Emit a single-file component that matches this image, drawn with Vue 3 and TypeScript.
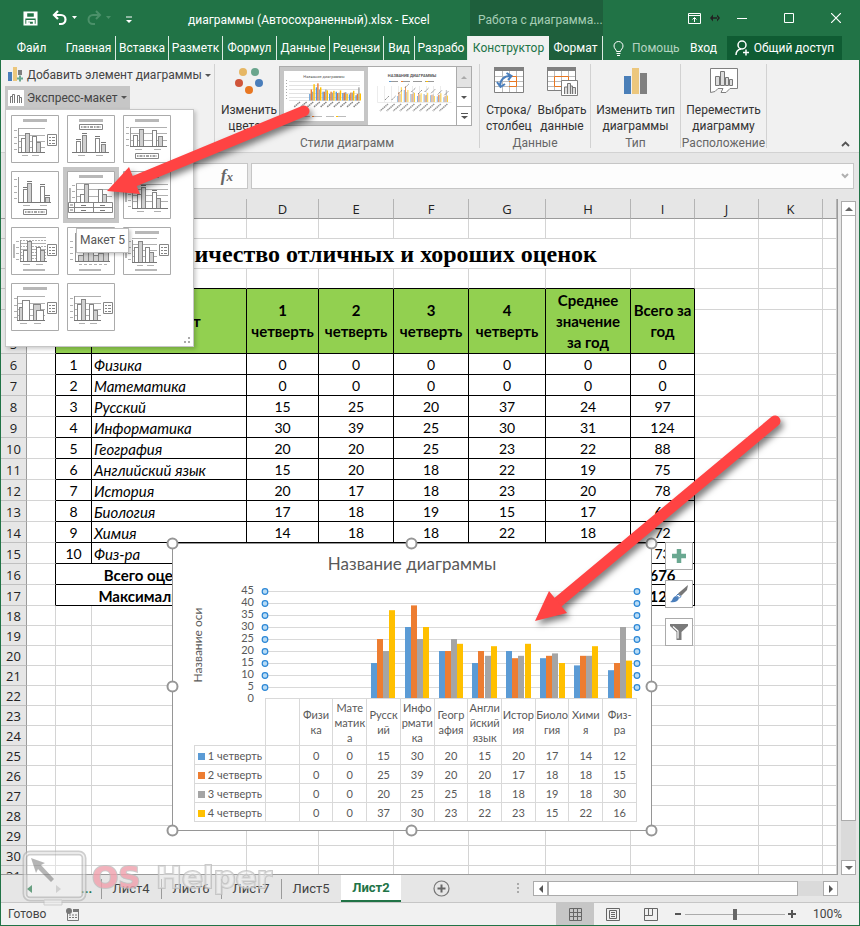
<script setup lang="ts">
import { ref } from 'vue'

interface Bar { x: number; y: number; w?: number; fill?: boolean; cap?: boolean }
interface Layout {
  title?: boolean
  legend?: 'right' | 'rightLow' | 'top' | 'bottom'
  grid?: number[]
  gridX?: [number, number]
  dashed?: boolean
  axisY?: boolean
  yTitle?: boolean
  xTitle?: boolean
  ticks?: number[]
  table?: boolean
  base: number
  baseX: [number, number]
  bars: Bar[]
  labels?: [number, number][]
}

const layouts: Layout[] = [
  { title: true, legend: 'right', grid: [13, 20, 26, 32], gridX: [7, 34], ticks: [15, 22, 28, 34], base: 37, baseX: [7, 34],
    bars: [{ x: 10, y: 23 }, { x: 14, y: 18, fill: true }, { x: 21, y: 21 }, { x: 25, y: 27, fill: true }], labels: [[11, 17], [21, 28]] },
  { title: true, legend: 'top', base: 37, baseX: [5, 42],
    bars: [{ x: 9, y: 26, cap: true }, { x: 15, y: 20, fill: true, cap: true }, { x: 28, y: 23, cap: true }, { x: 34, y: 29, fill: true, cap: true }], labels: [[11, 18], [29, 36]] },
  { title: true, legend: 'bottom', grid: [12, 18, 25], gridX: [7, 44], ticks: [12, 18, 24, 30], base: 31, baseX: [7, 44],
    bars: [{ x: 10, y: 20 }, { x: 16, y: 14, fill: true }, { x: 29, y: 15 }, { x: 35, y: 21, fill: true }], labels: [[12, 19], [31, 38]] },
  { legend: 'bottom', axisY: true, ticks: [8, 15, 21, 27], base: 31, baseX: [7, 40],
    bars: [{ x: 12, y: 18, cap: true }, { x: 16, y: 12, fill: true, cap: true }, { x: 29, y: 15, cap: true }, { x: 34, y: 26, fill: true, cap: true }], labels: [[12, 19], [29, 36]] },
  { title: true, yTitle: true, table: true, grid: [12, 18, 25], gridX: [9, 45], ticks: [14, 20, 26], base: 31, baseX: [9, 45],
    bars: [{ x: 13, y: 23 }, { x: 17, y: 13, fill: true }, { x: 31, y: 18 }, { x: 35, y: 23, fill: true }] },
  { title: true, yTitle: true, grid: [13, 18, 24, 30], gridX: [9, 45], ticks: [17, 23, 29, 35], base: 37, baseX: [9, 45],
    bars: [{ x: 14, y: 23 }, { x: 18, y: 16, fill: true, cap: true }, { x: 29, y: 21, cap: true }, { x: 33, y: 27, fill: true }], labels: [[14, 21], [31, 38]] },
  { yTitle: true, xTitle: true, legend: 'rightLow', dashed: true, grid: [10, 13, 16, 19, 22, 25, 28, 31], gridX: [9, 35], ticks: [14, 20, 26, 32], base: 34, baseX: [9, 36],
    bars: [{ x: 12, y: 23 }, { x: 16, y: 14, fill: true }, { x: 25, y: 20 }, { x: 29, y: 23, fill: true }], labels: [[12, 19], [25, 32]] },
  { title: true, xTitle: true, base: 34, baseX: [8, 43], ticks: [14, 20, 26, 32], axisY: true,
    bars: [{ x: 11, y: 28, w: 5, fill: true }, { x: 16, y: 25, w: 5, fill: true }, { x: 21, y: 18, w: 5, fill: true }, { x: 26, y: 28, w: 5, fill: true }, { x: 31, y: 26, w: 5, fill: true }, { x: 36, y: 22, w: 5, fill: true }],
    labels: [[12, 15], [17, 20], [22, 25], [27, 30], [32, 35], [37, 40]] },
  { title: true, yTitle: true, xTitle: true, legend: 'rightLow', grid: [11, 17, 23, 29], gridX: [9, 34], ticks: [14, 20, 26, 32], base: 35, baseX: [9, 34],
    bars: [{ x: 11, y: 20 }, { x: 15, y: 14, fill: true }, { x: 22, y: 20 }, { x: 26, y: 25, fill: true }], labels: [[14, 20], [24, 31]] },
  { title: true, legend: 'right', grid: [13, 20, 26, 32], gridX: [7, 34], ticks: [15, 22, 28, 34], base: 37, baseX: [6, 34],
    bars: [{ x: 8, y: 24, w: 4, fill: true }, { x: 11, y: 17, w: 7 }, { x: 22, y: 21, w: 7, fill: true }, { x: 25, y: 27, w: 7 }], labels: [[9, 16], [23, 30]] },
  { legend: 'right', grid: [13, 20, 26, 32], gridX: [7, 34], ticks: [15, 22, 28, 34], base: 37, baseX: [7, 34],
    bars: [{ x: 10, y: 21 }, { x: 14, y: 16, fill: true }, { x: 22, y: 21 }, { x: 26, y: 27, fill: true }], labels: [[12, 18], [23, 30]] }
]
const selectedLayout = ref(4)

const tabText = ['Главная', 'Вставка', 'Разметк', 'Формул', 'Данные', 'Рецензи', 'Вид', 'Разрабо']

const columns = ['A', 'B', 'C', 'D', 'E', 'F', 'G', 'H', 'I', 'J', 'K', '']

interface Subject { name: string; wrap: string[]; q: number[]; avg: number; sum: number }
const subjects: Subject[] = [
  { name: 'Физика', wrap: ['Физи', 'ка'], q: [0, 0, 0, 0], avg: 0, sum: 0 },
  { name: 'Математика', wrap: ['Мате', 'матик', 'а'], q: [0, 0, 0, 0], avg: 0, sum: 0 },
  { name: 'Русский', wrap: ['Русск', 'ий'], q: [15, 25, 20, 37], avg: 24, sum: 97 },
  { name: 'Информатика', wrap: ['Инфо', 'рмати', 'ка'], q: [30, 39, 25, 30], avg: 31, sum: 124 },
  { name: 'География', wrap: ['Геогр', 'афия'], q: [20, 20, 25, 23], avg: 22, sum: 88 },
  { name: 'Английский язык', wrap: ['Англи', 'йский', 'язык'], q: [15, 20, 18, 22], avg: 19, sum: 75 },
  { name: 'История', wrap: ['Истор', 'ия'], q: [20, 17, 18, 23], avg: 20, sum: 78 },
  { name: 'Биология', wrap: ['Биоло', 'гия'], q: [17, 18, 19, 15], avg: 17, sum: 69 },
  { name: 'Химия', wrap: ['Хими', 'я'], q: [14, 18, 18, 22], avg: 18, sum: 72 },
  { name: 'Физ-ра', wrap: ['Физ-', 'ра'], q: [12, 15, 30, 16], avg: 18, sum: 73 }
]
const series = [
  { name: '1 четверть', color: '#5b9bd5' },
  { name: '2 четверть', color: '#ed7d31' },
  { name: '3 четверть', color: '#a5a5a5' },
  { name: '4 четверть', color: '#ffc000' }
]
const blankRows = Array.from({ length: 14 }, (_, i) => 18 + i)
const axisValues = [0, 5, 10, 15, 20, 25, 30, 35, 40, 45]
const levelY = (v: number) => 122 - v * 2.4
const catX = (i: number) => 92 + (i + 1) * 33.8
const thumbX = (i: number) => 12 + i * 6.6
const handles = [[0, 0], [239, 0], [479, 0], [0, 143], [479, 143], [0, 287], [239, 287], [479, 287]]
const sheets = ['Лист4', 'Лист6', 'Лист7', 'Лист5']
const zoom = ref(100)
const formula = ref('')
</script>

<template>
  <div class="window">
    <header class="titlebar">
      <div class="quick">
        <button type="button" aria-label="Сохранить">
          <svg width="15" height="15" viewBox="0 0 16 16"><path d="M1.500 1.500h13v13h-13zM3.500 1.500v5.500h9v-5.500M4.500 14.500v-4h7v4M6.500 14v-2" fill="none" stroke="#fff" stroke-width="2" /></svg>
        </button>
        <button type="button" aria-label="Отменить" class="undo">
          <svg width="26" height="16" viewBox="0 0 26 16"><path d="M6 1L2 5l4 4M2 5h7a4.500 4.500 0 0 1 0 9h-2" fill="none" stroke="#fff" stroke-width="2.200" /><path d="M20 6h5l-2.500 3z" fill="#fff" /></svg>
        </button>
        <button type="button" aria-label="Повторить" class="redo">
          <svg width="26" height="16" viewBox="0 0 26 16"><path d="M10 1l4 4-4 4M14 5h-7a4.500 4.500 0 0 0 0 9h2" fill="none" stroke="#4b9069" stroke-width="2" /><path d="M20 6h5l-2.500 3z" fill="#4b9069" /></svg>
        </button>
        <button type="button" aria-label="Настройка панели" class="custom">
          <svg width="6" height="8" viewBox="0 0 6 8"><path d="M0 1h6" stroke="#fff" /><path d="M0 4h6l-3 3z" fill="#fff" /></svg>
        </button>
      </div>
      <h1>диаграммы (Автосохраненный).xlsx - Excel</h1>
      <div class="context">Работа с диаграмма...</div>
      <div class="win-buttons">
        <button type="button" aria-label="Параметры ленты">
          <svg width="13" height="11" viewBox="0 0 13 11"><path d="M.5.5h12v10H.5zM.5 2.500h12M6.500 9V4.500M4.500 6.500l2-2 2 2" fill="none" stroke="#fff" /></svg>
        </button>
        <svg class="resize" width="10" height="8" viewBox="0 0 10 8"><path d="M0 4l3-3.500v7zM10 4L7 .5v7zM2 3.200h6v1.600H2z" fill="#222" /></svg>
        <button type="button" aria-label="Свернуть"><svg width="10" height="10" viewBox="0 0 10 10"><path d="M0 5.500h10" stroke="#fff" /></svg></button>
        <button type="button" aria-label="Развернуть"><svg width="10" height="10" viewBox="0 0 10 10"><path d="M.5.5h9v9h-9z" fill="none" stroke="#fff" /></svg></button>
        <button type="button" aria-label="Закрыть"><svg width="10" height="10" viewBox="0 0 10 10"><path d="M0 0l10 10M10 0L0 10" stroke="#fff" stroke-width="1.200" /></svg></button>
      </div>
    </header>

    <nav class="tabs">
      <button type="button" class="file">Файл</button>
      <button v-for="t in tabText" :key="t" type="button" class="tab" :class="{ short: t === 'Вид' }">{{ t }}</button>
      <button type="button" class="tab active">Конструктор</button>
      <button type="button" class="tab dark">Формат</button>
      <button type="button" class="help">
        <svg width="11" height="15" viewBox="0 0 11 15"><path d="M3.500 10.500C3.500 8.500 1 7.800 1 5a4.500 4.500 0 0 1 9 0c0 2.800-2.500 3.500-2.500 5.500zM3.500 12.500h4M4 14.500h3" fill="none" stroke="#fff" /></svg>
        Помощь
      </button>
      <button type="button" class="login">Вход</button>
      <button type="button" class="share">
        <svg width="15" height="16" viewBox="0 0 15 16"><circle cx="7" cy="5" r="4" fill="none" stroke="#fff" stroke-width="1.500" /><path d="M1 15c0-3.500 2-5.500 5-6M11 9.500v6M8 12.500h6" fill="none" stroke="#fff" stroke-width="1.500" /></svg>
        Общий доступ
      </button>
    </nav>

    <section class="ribbon">
      <div class="group layouts">
        <button type="button" class="line">
          <svg width="16" height="16" viewBox="0 0 16 16"><path d="M0 5h4v9H0z" fill="#4a7ebb" /><path d="M5 0h4v14H5z" fill="#ecc77d" /><path d="M10 3h4v5h-4z" fill="#7f7f7f" /><path d="M9 11.500h6M12 8.500v6" stroke="#6aa891" stroke-width="2" /></svg>
          Добавить элемент диаграммы <i class="caret"></i>
        </button>
        <button type="button" class="line express">
          <svg width="16" height="16" viewBox="0 0 16 16"><path d="M0 0h16v16H0z" fill="#fff" /><path d="M2.500 13V6.500h2V13M4.500 13V4.500h2V13M9.500 13V5.500h2V13M11.500 13V7.500h2V13" fill="none" stroke="#777" /></svg>
          Экспресс-макет <i class="caret"></i>
        </button>
      </div>

      <div class="group styles">
        <div class="group-body">
          <button type="button" class="big colors">
            <svg width="30" height="28" viewBox="0 0 30 28"><circle cx="9" cy="5" r="4" fill="#e6b765" /><circle cx="21" cy="5" r="4" fill="#6aa58d" /><circle cx="5" cy="16" r="4" fill="#d0553a" /><circle cx="25" cy="16" r="4" fill="#4a7ebb" /><circle cx="15" cy="23" r="4" fill="#e87722" /></svg>
            <span>Изменить<br>цвета <i class="caret"></i></span>
          </button>
          <div class="gallery">
            <button type="button" class="thumb on" aria-label="Стиль 1">
              <svg width="80" height="48" viewBox="0 0 80 48">
                <path d="M0 0h80v48H0z" fill="#fff" />
                <text x="40" y="6" class="tiny">Название диаграммы</text>
                <path d="M5 9.500h71M5 13.500h71M5 17.500h71M5 21.500h71M5 25.500h71M5 28.500h71" stroke="#e2e2e2" />
                <path d="M2.500 8v21" stroke="#aaa" stroke-dasharray="1 2" />
                <template v-for="(s, i) in subjects" :key="i">
                  <rect v-for="(v, k) in s.q" :key="k" :x="thumbX(i) + k * 1.4" :y="28.500 - v * .44" width="1.400" :height="v * .44" :fill="series[k].color" />
                  <path :d="`M${thumbX(i) + 4} 30l-6 5`" stroke="#888" stroke-width="1.500" stroke-dasharray="1.500 .5" />
                </template>
                <path d="M18 44.500h8M30 44.500h8M42 44.500h8M54 44.500h8" stroke="#bbb" /><path d="M28 44.500h2" stroke="#ed7d31" /><path d="M52 44.500h2" stroke="#ffc000" />
              </svg>
            </button>
            <button type="button" class="thumb" aria-label="Стиль 2">
              <svg width="80" height="48" viewBox="0 0 80 48">
                <text x="40" y="5" class="tiny strong">НАЗВАНИЕ ДИАГРАММЫ</text>
                <path d="M17 9.500h46" stroke="#999" stroke-dasharray="9 3" /><path d="M17 9.500h2" stroke="#5b9bd5" /><path d="M29 9.500h2" stroke="#ed7d31" /><path d="M54 9.500h2" stroke="#ffc000" />
                <path d="M5.500 14v16.500h74M12.500 14v16M19.500 14v16M26.500 14v16M33.500 14v16M40.500 14v16M47.500 14v16M54.500 14v16M61.500 14v16M68.500 14v16" fill="none" stroke="#ececec" />
                <template v-for="(s, i) in subjects" :key="i">
                  <rect v-for="(v, k) in s.q" :key="k" :x="thumbX(i) + k * 1.2" :y="30 - v * .4" width="1" :height="v * .4" :fill="series[k].color" opacity=".75" />
                  <path :d="`M${thumbX(i) + 1} ${28 - s.q[0] * .4}l4 -4`" stroke="#888" stroke-dasharray="1.500 .5" />
                  <path :d="`M${thumbX(i) + 4} 32l-8 7`" stroke="#999" stroke-width="1.500" stroke-dasharray="1.500 .5" />
                </template>
              </svg>
            </button>
            <div class="spin">
              <button type="button" aria-label="Вверх" class="off"><svg width="6" height="3" viewBox="0 0 6 3"><path d="M0 3l3-3 3 3z" fill="#aaa" /></svg></button>
              <button type="button" aria-label="Вниз"><svg width="6" height="3" viewBox="0 0 6 3"><path d="M0 0h6L3 3z" fill="#555" /></svg></button>
              <button type="button" aria-label="Ещё"><svg width="7" height="6" viewBox="0 0 7 6"><path d="M0 .5h7" stroke="#555" /><path d="M0 3h7L3.500 6z" fill="#555" /></svg></button>
            </div>
          </div>
        </div>
        <div class="caption">Стили диаграмм</div>
      </div>

      <div class="group data">
        <div class="group-body">
          <button type="button" class="big">
            <svg width="30" height="30" viewBox="0 0 30 30"><path d="M.5 1.500h29v25H.5z" fill="#fff" stroke="#808080" /><path d="M0 1h30v4H0z" fill="#808080" /><path d="M1 10.500h28M1 15.500h28M1 20.500h28M8.500 5v21M15.500 5v21M22.500 5v21" stroke="#bbb" /><path d="M15 10.500h7.500v10H15M15 15.500h7" fill="none" stroke="#e87722" /><path d="M6 20c0-6 4-10 10-10M3 16l3.500 5 4.500-3M12.500 7l5 3-3.500 4" fill="none" stroke="#4a7ebb" stroke-width="2" /></svg>
            <span>Строка/<br>столбец</span>
          </button>
          <button type="button" class="big">
            <svg width="31" height="30" viewBox="0 0 31 30"><path d="M.5 1.500h28v23H.5z" fill="#fff" stroke="#808080" /><path d="M0 1h29v4H0z" fill="#808080" /><path d="M1 10.500h27M1 15.500h27M1 20.500h27M7.500 5v19M14.500 5v19M21.500 5v19" stroke="#bbb" /><path d="M7.500 20.500v-10h14v5M7.500 20.500h7" fill="none" stroke="#e87722" /><path d="M14.500 14.500h16v15h-16z" fill="#fff" stroke="#808080" /><path d="M17.500 28v-7h3v7M20.500 28V17.500h3V28M25.500 28v-6.500h3V28M23.500 28v-8h2v8" fill="#ddd" stroke="#777" /></svg>
            <span>Выбрать<br>данные</span>
          </button>
        </div>
        <div class="caption">Данные</div>
      </div>

      <div class="group type">
        <div class="group-body">
          <button type="button" class="big">
            <svg width="24" height="28" viewBox="0 0 24 28"><path d="M0 9h7v18H0z" fill="#4a7fb8" /><path d="M8 1h7v26H8z" fill="#ecc77d" /><path d="M16 6h7v21h-7z" fill="#808080" /></svg>
            <span>Изменить тип<br>диаграммы</span>
          </button>
        </div>
        <div class="caption">Тип</div>
      </div>

      <div class="group place">
        <div class="group-body">
          <button type="button" class="big">
            <svg width="28" height="28" viewBox="0 0 28 28"><path d="M.5 25.500V1.500h27v20H20l-4 4h-5l2-4H8l-3 3z" fill="#fff" stroke="#808080" /><path d="M5.500 18.500v-9h4v9zM10.500 18.500v-14h4v14zM15.500 18.500v-8h3v8zM19.500 18.500v-6h3v6z" fill="#ddd" stroke="#777" /></svg>
            <span>Переместить<br>диаграмму</span>
          </button>
        </div>
        <div class="caption">Расположение</div>
      </div>

      <button type="button" class="collapse" aria-label="Свернуть ленту"><svg width="9" height="6" viewBox="0 0 9 6"><path d="M1 5l3.500-3.500L8 5" fill="none" stroke="#555" stroke-width="1.800" /></svg></button>
    </section>

    <div class="formula">
      <div class="fx-box">
        <button type="button" aria-label="Ввод"><svg width="9" height="9" viewBox="0 0 9 9"><path d="M1 5l2.500 3L8 1" fill="none" stroke="#b0b0b0" stroke-width="1.800" /></svg></button>
        <button type="button" aria-label="Вставить функцию" class="fx">f<small>x</small></button>
      </div>
      <div class="input-box">
        <input v-model="formula" type="text" aria-label="Строка формул">
        <svg width="8" height="6" viewBox="0 0 8 6"><path d="M1 1l3 3 3-3" fill="none" stroke="#b0b0b0" stroke-width="2" /></svg>
      </div>
    </div>

    <main class="workspace">
      <div class="sheet">
        <table class="cells">
          <colgroup><col class="w-h"><col class="w-a"><col class="w-b"><col class="w-c"><col class="w-d"><col class="w-e"><col class="w-e"><col class="w-g"><col class="w-hh"><col class="w-i"><col class="w-i"><col class="w-i"><col></colgroup>
          <thead>
            <tr><th class="corner"></th><th v-for="(c, i) in columns" :key="i" scope="col" class="col-h">{{ c }}</th></tr>
          </thead>
          <tbody>
            <tr class="r20"><th scope="row">1</th><td v-for="n in 12" :key="n"></td></tr>
            <tr class="r30"><th scope="row">2</th><td></td><td colspan="8" class="title">Количество отличных и хороших оценок</td><td></td><td></td><td></td></tr>
            <tr class="r20"><th scope="row">3</th><td></td><td v-for="n in 8" :key="n" class="over"></td><td></td><td></td><td></td></tr>
            <tr class="r21">
              <th scope="row">4</th><td class="edge"></td>
              <td class="g" rowspan="2">№</td><td class="g" rowspan="2">Предмет</td>
              <td v-for="n in 4" :key="n" class="g" rowspan="2">{{ n }}<br>четверть</td>
              <td class="g" rowspan="2">Среднее<br>значение<br>за год</td><td class="g" rowspan="2">Всего за<br>год</td>
              <td></td><td></td><td></td>
            </tr>
            <tr class="r44"><th scope="row">5</th><td class="edge"></td><td></td><td></td><td></td></tr>
            <tr v-for="(s, i) in subjects" :key="s.name" class="r21">
              <th scope="row">{{ i + 6 }}</th><td class="edge"></td>
              <td class="k">{{ i + 1 }}</td><td class="k name">{{ s.name }}</td>
              <td v-for="(v, k) in s.q" :key="k" class="k">{{ v }}</td>
              <td class="k">{{ s.avg }}</td><td class="k">{{ s.sum }}</td>
              <td></td><td></td><td></td>
            </tr>
            <tr class="r21"><th scope="row">16</th><td class="edge"></td><td colspan="2" class="k b">Всего оценок</td><td v-for="n in 5" :key="n" class="k"></td><td class="k b">676</td><td></td><td></td><td></td></tr>
            <tr class="r21"><th scope="row">17</th><td class="edge"></td><td colspan="2" class="k b">Максимальное</td><td v-for="n in 5" :key="n" class="k"></td><td class="k b">124</td><td></td><td></td><td></td></tr>
            <tr v-for="r in blankRows" :key="r" class="r20"><th scope="row">{{ r }}</th><td v-for="n in 12" :key="n"></td></tr>
          </tbody>
        </table>

        <figure class="chart">
          <figcaption>Название диаграммы</figcaption>
          <svg class="plot" width="478" height="121" viewBox="0 0 478 121">
            <text class="ax ax-title" text-anchor="middle" transform="translate(29 68) rotate(-90)">Название оси</text>
            <g v-for="v in axisValues" :key="v">
              <text class="ax" x="81" :y="levelY(v) + 3" text-anchor="end">{{ v }}</text>
              <path v-if="v" :d="`M92 ${Math.round(levelY(v)) + .5}h371`" stroke="#d9d9d9" />
            </g>
            <template v-for="(s, i) in subjects" :key="i">
              <template v-for="(v, k) in s.q" :key="k">
                <rect v-if="v" :x="Math.round(catX(i) + 4.500 + k * 6.200)" :y="levelY(v)" width="6" :height="121 - levelY(v)" :fill="series[k].color" />
              </template>
            </template>
            <template v-for="v in axisValues" :key="v">
              <template v-if="v">
                <circle cx="92" :cy="levelY(v) + .5" r="2.800" fill="#b9dcf5" stroke="#2a86d6" stroke-width="1.200" />
                <circle cx="464" :cy="levelY(v) + .5" r="2.800" fill="#b9dcf5" stroke="#2a86d6" stroke-width="1.200" />
              </template>
            </template>
          </svg>
          <table class="legend">
            <colgroup><col class="lg"><col v-for="n in 11" :key="n"></colgroup>
            <thead>
              <tr><td class="none"></td><td></td><th v-for="s in subjects" :key="s.name" scope="col"><template v-for="(w, i) in s.wrap" :key="i"><br v-if="i">{{ w }}</template></th></tr>
            </thead>
            <tbody>
              <tr v-for="(q, k) in series" :key="k"><th scope="row"><i class="key" :style="{ background: q.color }"></i>{{ q.name }}</th><td></td><td v-for="s in subjects" :key="s.name">{{ s.q[k] }}</td></tr>
            </tbody>
          </table>
          <svg class="handles" width="480" height="288" viewBox="0 0 480 288"><circle v-for="(h, i) in handles" :key="i" :cx="h[0] + .5" :cy="h[1] + .5" r="5" fill="#fff" stroke="#969696" stroke-width="2" /></svg>
        </figure>

        <div class="chart-tools">
          <button type="button" aria-label="Элементы диаграммы"><svg width="16" height="16" viewBox="0 0 16 16"><path d="M8 1v14M1 8h14" stroke="#6aa891" stroke-width="4.500" /></svg></button>
          <button type="button" aria-label="Стили диаграммы"><svg width="20" height="20" viewBox="0 0 20 20"><path d="M19 1l-1 5-6 6-3-2.500z" fill="#777" /><path d="M9 10l3 2.500-1.500 1.500-3-2.500z" fill="#fff" stroke="#4a7ebb" /><path d="M1 18c3-1 2-5 6-6l3 2c-1 4-5 5-9 4z" fill="#4a7ebb" /></svg></button>
          <button type="button" aria-label="Фильтры диаграммы"><svg width="18" height="18" viewBox="0 0 18 18"><path d="M0 1h18v2l-6.500 6v8h-5V9L0 3z" fill="#7a7a7a" /><path d="M3 3.500l5 4.500v7.500" fill="none" stroke="#fff" stroke-width="1.200" /></svg></button>
        </div>
      </div>

      <div class="vscroll">
        <button type="button" aria-label="Прокрутка вверх"><svg width="8" height="4" viewBox="0 0 8 4"><path d="M0 4l4-4 4 4z" fill="#666" /></svg></button>
        <div class="vthumb"></div>
        <button type="button" aria-label="Прокрутка вниз"><svg width="8" height="4" viewBox="0 0 8 4"><path d="M0 0h8L4 4z" fill="#666" /></svg></button>
      </div>
    </main>

    <footer class="sheets">
      <div class="nav"><button type="button" aria-label="Назад"><svg width="5" height="8" viewBox="0 0 5 8"><path d="M5 0L0 4l5 4z" fill="#217346" /></svg></button><button type="button" aria-label="Вперёд"><svg width="5" height="8" viewBox="0 0 5 8"><path d="M0 0l5 4-5 4z" fill="#bbb" /></svg></button><b>...</b></div>
      <button v-for="s in sheets" :key="s" type="button" class="st">{{ s }}</button>
      <button type="button" class="st on">Лист2</button>
      <button type="button" class="add" aria-label="Новый лист"><svg width="17" height="17" viewBox="0 0 17 17"><circle cx="8.500" cy="8.500" r="7.500" fill="none" stroke="#777" stroke-width="1.200" /><path d="M8.500 4.500v8M4.500 8.500h8" stroke="#666" stroke-width="2" /></svg></button>
      <svg class="dots" width="3" height="11" viewBox="0 0 3 11"><path d="M1 0h2v2H1zM1 4h2v2H1zM1 8h2v2H1z" fill="#aaa" /></svg>
      <div class="hscroll">
        <button type="button" aria-label="Прокрутка влево"><svg width="4" height="8" viewBox="0 0 4 8"><path d="M4 0L0 4l4 4z" fill="#555" /></svg></button>
        <div class="hthumb"></div>
        <button type="button" aria-label="Прокрутка вправо"><svg width="4" height="8" viewBox="0 0 4 8"><path d="M0 0l4 4-4 4z" fill="#555" /></svg></button>
      </div>
    </footer>

    <footer class="status">
      <span>Готово</span>
      <svg class="macro" width="13" height="13" viewBox="0 0 13 13"><path d="M1.500 4.500v8h11V2.500H7" fill="none" stroke="#777" /><path d="M7 1h6v3H7z" fill="#777" /><circle cx="3" cy="3" r="3" fill="#777" /><path d="M3 7h8M3 9.500h8" stroke="#777" stroke-dasharray="2 1" /></svg>
      <div class="views">
        <button type="button" class="on" aria-label="Обычный"><svg width="13" height="13" viewBox="0 0 13 13"><path d="M.5.5h12v12H.5zM.5 4.500h12M.5 8.500h12M4.500.5v12M8.500.5v12" fill="none" stroke="#666" /></svg></button>
        <button type="button" aria-label="Разметка страницы"><svg width="14" height="13" viewBox="0 0 14 13"><path d="M.5.5h13v12H.5zM3.500 2.500h7v8h-7zM5 4.500h4M5 6.500h4M5 8.500h4" fill="none" stroke="#666" /></svg></button>
        <button type="button" aria-label="Страничный"><svg width="14" height="13" viewBox="0 0 14 13"><path d="M.5.5h13v12H.5zM4.500.5v7M8.500.5v7M.5 7.500h8" fill="none" stroke="#666" /></svg></button>
      </div>
      <button type="button" class="pm" aria-label="Уменьшить"><svg width="8" height="8" viewBox="0 0 8 8"><path d="M1 4h6" stroke="#555" stroke-width="2" /></svg></button>
      <input v-model="zoom" type="range" min="0" max="200" aria-label="Масштаб">
      <button type="button" class="pm" aria-label="Увеличить"><svg width="8" height="8" viewBox="0 0 8 8"><path d="M0 4h8M4 0v8" stroke="#555" stroke-width="2" /></svg></button>
      <span class="pct">{{ zoom }}%</span>
    </footer>

    <div class="menu">
      <button v-for="(l, i) in layouts" :key="i" type="button" :class="{ sel: i === selectedLayout }" :aria-label="`Макет ${i + 1}`" @click="selectedLayout = i">
        <svg width="48" height="48" viewBox="0 0 48 48" fill="none">
          <path d="M.5.5h47v47H.5z" fill="#fff" stroke="#ababab" />
          <path v-if="l.title" d="M12 4h24v3H12z" fill="#b8b8b8" />
          <path v-if="l.yTitle" d="M2 17h2v14H2z" fill="#b8b8b8" />
          <path v-if="l.xTitle" d="M12 42h22v2H12z" fill="#b8b8b8" />
          <path v-for="y in l.grid || []" :key="'g' + y" :d="`M${l.gridX![0]} ${y + .5}H${l.gridX![1]}`" stroke="#b0b0b0" :stroke-dasharray="l.dashed && y % 2 ? '2 1' : undefined" />
          <path v-for="y in l.ticks || []" :key="'t' + y" :d="`M${l.yTitle ? 5 : 3} ${y + .5}h3`" stroke="#b0b0b0" />
          <path v-if="l.axisY || l.grid" :d="`M${l.baseX[0] + .5} ${l.axisY ? 6 : 13}V${l.base}`" stroke="#999" />
          <template v-for="(b, k) in l.bars" :key="'b' + k">
            <rect :x="b.x + .5" :y="b.y + .5" :width="b.w || 4" :height="l.base - b.y" :fill="b.fill ? '#d0d0d0' : '#fff'" stroke="#858585" />
            <path v-if="b.cap" :d="`M${b.x} ${b.y - 1.500}h5`" stroke="#777" />
          </template>
          <path :d="`M${l.baseX[0]} ${l.base + .5}H${l.baseX[1]}`" stroke="#777" />
          <path v-for="(p, k) in l.labels || []" :key="'l' + k" :d="`M${p[0]} ${l.base + 3.500}H${p[1]}`" stroke="#b0b0b0" />
          <g v-if="l.legend === 'right' || l.legend === 'rightLow'" :transform="l.legend === 'right' ? 'translate(36 19)' : 'translate(36 17)'">
            <path d="M.5.5h9v11h-9z" fill="#fff" stroke="#858585" /><path d="M2 3.500h2M2 6.500h2M2 9.500h2M5 3.500h3M5 6.500h3M5 9.500h3" stroke="#858585" />
          </g>
          <g v-if="l.legend === 'top' || l.legend === 'bottom'" :transform="l.legend === 'top' ? 'translate(12 9)' : 'translate(12 38)'">
            <path d="M.5.5h23v5H.5z" fill="#fff" stroke="#858585" /><path d="M2 3h20" stroke="#858585" stroke-width="1.500" stroke-dasharray="1.500 1 3 1" />
          </g>
          <g v-if="l.table"><path d="M1.500 31.500h44v10h-44zM1.500 36.500h44M7.500 31.500v10M26.500 31.500v10" fill="#fff" stroke="#858585" /><path d="M3 34h3M3 39h3M14 34.500h5M33 34.500h5M14 39.500h5M33 39.500h5" stroke="#777" /></g>
        </svg>
      </button>
      <svg class="grip" width="6" height="6" viewBox="0 0 6 6"><path d="M4 0h2v2H4zM4 4h2v2H4zM0 4h2v2H0z" fill="#aaa" /></svg>
      <div class="tip" role="tooltip">Макет 5</div>
    </div>

    <svg class="brand" width="260" height="64" viewBox="0 0 260 64">
      <g opacity=".8"><rect x="3" y="3" width="59" height="46" rx="5" fill="#fff" fill-opacity=".5" stroke="#b4b4b4" stroke-width="5" /><rect x="3" y="3" width="59" height="46" rx="5" fill="none" stroke="#eee" stroke-width="1.500" /><path d="M22 50h18v5H22z" fill="#eee" stroke="#bbb" /><path d="M9 8l14 5-4 2 13 14-3 3-13-13-2 4z" fill="#8d8d8d" /></g>
      <text x="70" y="38" class="os">OS</text>
      <text x="134" y="38" class="helper">Helper</text>
    </svg>

    <svg class="arrows" width="860" height="926" viewBox="0 0 860 926">
      <g fill="#ff4343" stroke="#ff4343">
        <path d="M304 111L130 183" stroke-width="11" stroke-linecap="round" /><path d="M107 191l22-24 11 27z" stroke="none" />
        <path d="M775 421L557 603" stroke-width="11" stroke-linecap="round" /><path d="M535 621l14-30 18 22z" stroke="none" />
      </g>
    </svg>
  </div>
</template>

<style>
body { margin: 0; background: #e6e6e6; }
</style>

<style scoped>
* { box-sizing: border-box; }
.window { position: relative; display: flex; flex-direction: column; height: 100vh; min-height: 600px; overflow: hidden; border: 1px solid #217346; border-top: 0; background: #e6e6e6; color: #444; font: 12px/16px Roboto, "Open Sans", sans-serif; }
button { display: flex; align-items: center; justify-content: center; margin: 0; padding: 0; border: 0; background: none; color: inherit; font: inherit; white-space: nowrap; }
svg { display: block; flex: none; }

.titlebar { display: grid; flex: none; grid-template-columns: 187px 282px 133px 1fr; height: 36px; background: #217346; color: #fff; }
.quick { display: flex; align-items: center; gap: 8px; padding: 0 0 4px 22px; }
.quick .undo { margin-left: 6px; }
.quick .custom { margin-left: 6px; padding-top: 4px; }
h1 { margin: 0; font-size: 12px; font-weight: 400; line-height: 40px; white-space: nowrap; }
.context { background: #1e5f3c; color: #a5cdb5; line-height: 40px; padding-left: 8px; white-space: nowrap; }
.win-buttons { display: flex; align-items: center; justify-content: flex-end; padding: 0 18px 4px 0; }
.win-buttons button:nth-of-type(n + 3) { margin-left: 37px; }
.win-buttons .resize { margin: 0 17px 0 9px; }

.tabs { display: flex; flex: none; height: 24px; background: #217346; color: #fff; line-height: 24px; }
.file { width: 61px; }
.tab { width: 54px; border-right: 1px solid #dcebe2; }
.tab:nth-of-type(3n) { width: 53px; }
.tab.short { width: 31px; }
.tab.active { width: 81px; background: #f1f1f1; color: #217346; border: 0; }
.tab.dark { background: #1e5f3c; }
.help { gap: 8px; padding-left: 10px; color: #b5d3c1; }
.login { margin-left: auto; }
.share { gap: 4px; width: 115px; margin: 0 17px 0 10px; background: #0f5c33; }

.ribbon { position: relative; display: flex; flex: none; height: 93px; padding-top: 4px; background: #f1f1f1; border-bottom: 1px solid #d2d2d2; }
.group { display: flex; flex-direction: column; height: 84px; border-right: 1px solid #d2d2d2; }
.group-body { display: flex; flex: 1; }
.layouts { width: 214px; padding-left: 4px; align-items: flex-start; }
.line { height: 22px; gap: 3px; padding: 0 3px; }
.express { background: #c6c6c6; height: 23px; width: 125px; justify-content: flex-start; }
.caret { display: inline-block; border: 3px solid transparent; border-top-color: #555; border-bottom: 0; vertical-align: middle; }
.big { flex-direction: column; justify-content: flex-start; gap: 6px; padding-top: 2px; color: #333; }
.big svg { height: 30px; }
.big span { text-align: center; }
.caption { text-align: center; line-height: 10px; color: #666; }
.styles { width: 265px; }
.colors { width: 64px; padding-left: 4px; }
.gallery { display: flex; height: 60px; margin-top: 2px; border: 1px solid #ababab; background: #fff; }
.thumb { width: 88px; border: 4px solid transparent; }
.thumb.on { border-color: #c6c6c6; }
.tiny { font-size: 4px; text-anchor: middle; fill: #555; }
.tiny.strong { font-weight: 700; }
.spin { display: grid; grid-template-rows: 20px 19px 19px; width: 15px; border-left: 1px solid #ababab; }
.spin button + button { border-top: 1px solid #ababab; }
.spin .off { background: #e3e3e3; }
.data { width: 111px; }
.data .group-body { gap: 6px; padding: 0 6px; }
.data .big { flex: 1; }
.type { width: 90px; }
.place { width: 86px; }
.type .group-body, .place .group-body { justify-content: center; }
.collapse { position: absolute; right: 9px; bottom: 5px; }

.formula { display: flex; flex: none; gap: 3px; padding: 10px 5px 10px 150px; height: 46px; }
.fx-box { display: flex; flex: none; align-items: center; justify-content: space-around; width: 97px; height: 26px; border: 1px solid #c6c6c6; background: #fdfdfd; padding-left: 18px; }
.fx { align-items: baseline; font: italic 700 17px/18px "Liberation Serif", serif; color: #666; }
.fx small { font-size: 13px; }
.input-box { display: flex; flex: 1; align-items: center; height: 26px; padding-right: 4px; border: 1px solid #c6c6c6; background: #fdfdfd; }
.input-box input { flex: 1; min-width: 0; border: 0; outline: 0; background: none; font: inherit; }

.workspace { display: flex; flex: 1; min-height: 0; }
.sheet { position: relative; flex: 1; min-width: 0; overflow: hidden; background: #fff; border-right: 1px solid #9b9b9b; border-bottom: 1px solid #9b9b9b; }
.cells { width: 100%; table-layout: fixed; border-spacing: 0; color: #000; font: 14px/18px Lato, "Noto Sans", sans-serif; }
.w-h { width: 26px; } .w-a { width: 29px; } .w-b { width: 36px; } .w-c { width: 155px; } .w-d { width: 72px; }
.w-e { width: 75px; } .w-g { width: 77px; } .w-hh { width: 85px; } .w-i { width: 64px; }
.cells th { padding: 0; height: 20px; background: #e6e6e6; border-right: 1px solid #9b9b9b; border-bottom: 1px solid #c0c0c0; color: #222; font: 13px/18px "Open Sans", "Noto Sans", sans-serif; vertical-align: bottom; text-align: center; }
.cells thead th { border-right-color: #b4b4b4; border-bottom-color: #9b9b9b; }
.cells td { padding: 0; border-right: 1px solid #d4d4d4; border-bottom: 1px solid #d4d4d4; text-align: center; white-space: nowrap; }
.r20 { height: 20px; } .r21 { height: 21px; } .r30 { height: 30px; } .r44 { height: 44px; }
.cells .title { font: 700 24px/28px "Liberation Serif", serif; }
.cells .over { border-bottom-color: #000; }
.cells .edge { border-right-color: #000; }
.cells .k, .cells .g { border-right-color: #000; border-bottom-color: #000; }
.cells .k { padding-top: 2px; }
.cells .g { background: #92d050; font-size: 15px; font-weight: 700; line-height: 21px; }
.cells .name { padding-left: 2px; text-align: left; font-size: 15px; font-style: italic; }
.cells .b { font-size: 15px; font-weight: 700; }

.chart { position: absolute; left: 171px; top: 344px; width: 480px; height: 288px; margin: 0; border: 1px solid #969696; background: #fff; color: #595959; font: 11px/15px Lato, "Noto Sans", sans-serif; }
.chart figcaption { height: 33px; padding-top: 10px; text-align: center; font-size: 17px; line-height: 20px; }
.plot { overflow: visible; }
.ax { fill: #595959; font-size: 11px; }
.ax-title { font-size: 12px; }
.legend { width: 443px; margin-left: 21px; table-layout: fixed; border-collapse: collapse; }
.legend .lg { width: 71px; }
.legend th, .legend td { height: 19px; padding: 0; border: 1px solid #d9d9d9; text-align: center; font-weight: 400; line-height: 15px; white-space: nowrap; }
.legend thead th { height: 47px; }
.legend .none { border-top-color: transparent; border-left-color: transparent; }
.key { display: inline-block; width: 7px; height: 7px; margin-right: 3px; }
.handles { position: absolute; left: -1px; top: -1px; overflow: visible; }
.chart-tools { position: absolute; left: 664px; top: 343px; display: grid; gap: 10px; }
.chart-tools button { width: 28px; height: 28px; border: 1px solid #ababab; background: #fff; }

.vscroll { display: flex; flex-direction: column; flex: none; width: 15px; margin: 2px 3px 0; background: #dadada; }
.vscroll button, .hscroll button { flex: none; width: 15px; height: 15px; border: 1px solid #ababab; background: #fff; }
.vthumb { height: 605px; margin-bottom: auto; border: 1px solid #ababab; border-top: 0; background: #fff; }

.sheets { display: flex; flex: none; height: 28px; font-size: 13px; line-height: 27px; border-bottom: 1px solid #c6c6c6; }
.nav { display: flex; align-items: center; gap: 24px; width: 100px; padding-left: 26px; color: #217346; }
.nav b { margin-left: -4px; }
.st { width: 60px; position: relative; }
.st::before { content: ""; position: absolute; left: 0; top: 4px; height: 20px; border-left: 1px solid #9b9b9b; }
.st.on { background: #fff; color: #217346; font-weight: 700; border-bottom: 2px solid #217346; }
.st.on::before { display: none; }
.add { margin: 0 auto 0 32px; }
.dots { align-self: center; margin-right: 14px; }
.hscroll { display: flex; align-self: center; width: 305px; margin-right: 21px; background: #dadada; }
.hthumb { width: 250px; margin-right: auto; border: 1px solid #ababab; background: #fff; }

.status { display: flex; flex: none; align-items: center; height: 22px; padding-left: 7px; background: #f1f1f1; }
.macro { margin-left: 20px; }
.views { display: flex; align-self: stretch; margin: 0 3px 0 auto; }
.views button { width: 38px; }
.views .on { background: #c6c6c6; }
.pm { width: 10px; }
.status input { width: 100px; height: 12px; margin: 0 2px; appearance: none; background: linear-gradient(#ababab, #ababab) center / 100% 1px no-repeat; }
.status input::-webkit-slider-thumb { appearance: none; width: 4px; height: 11px; background: #666; }
.pct { width: 28px; margin: 0 18px 0 16px; }

.menu { position: absolute; left: 4px; top: 109px; display: grid; grid-template-columns: repeat(3, 56px); align-content: start; width: 189px; height: 238px; padding: 1px; background: #fff; border: 1px solid #c6c6c6; box-shadow: 2px 2px 4px rgba(0, 0, 0, .2); }
.menu button { height: 56px; }
.menu .sel { background: #c6c6c6; }
.grip { position: absolute; right: 3px; bottom: 3px; }
.tip { position: absolute; left: 70px; top: 118px; width: 53px; height: 25px; border: 1px solid #bebebe; background: #fff; box-shadow: 2px 2px 3px rgba(0, 0, 0, .2); color: #575757; text-align: center; line-height: 23px; }

.brand { position: absolute; left: 21px; top: 850px; opacity: .8; pointer-events: none; }
.os, .helper { font: 700 31px "DejaVu Sans", sans-serif; paint-order: stroke; }
.os { fill: #f0a0ac; stroke: #bdbdbd; stroke-width: 2px; }
.helper { fill: #f4f4f4; fill-opacity: .5; stroke: #bdbdbd; stroke-width: 2px; }
.arrows { position: absolute; left: -1px; top: 0; pointer-events: none; filter: drop-shadow(3px 4px 3px rgba(0, 0, 0, .5)); }
</style>
